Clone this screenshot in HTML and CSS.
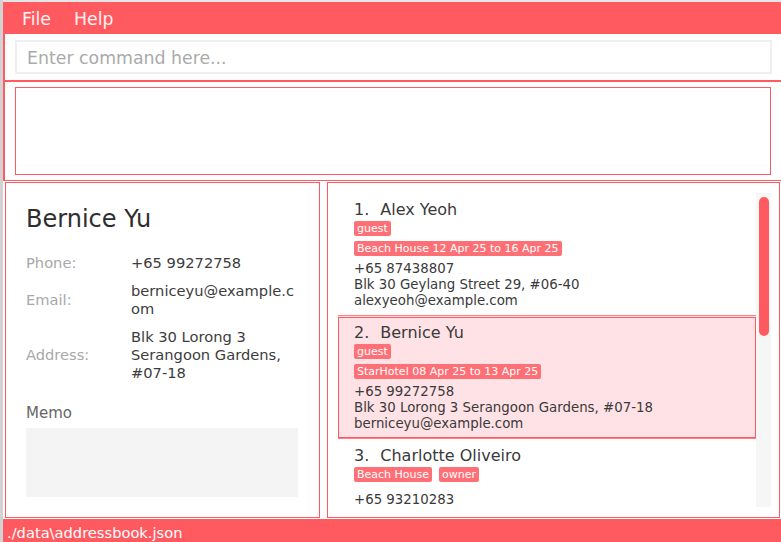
FILE: index.html
```html
<!DOCTYPE html>
<html>
<head>
<meta charset="utf-8">
<title>Address Book</title>
<link rel="stylesheet" href="styles.css">
</head>
<body>
<div class="app">
  <div class="menubar">
    <span class="menu-item">File</span>
    <span class="menu-item">Help</span>
  </div>
  <div class="command-area">
    <div class="command-box">Enter command here...</div>
  </div>
  <div class="result-area">
    <div class="result-box"></div>
  </div>
  <div class="main">
    <div class="panel detail-panel">
      <div class="detail-name">Bernice Yu</div>
      <div class="detail-grid">
        <div class="label">Phone:</div>
        <div class="value">+65 99272758</div>
        <div class="label">Email:</div>
        <div class="value email">berniceyu@example.com</div>
        <div class="label">Address:</div>
        <div class="value">Blk 30 Lorong 3 Serangoon Gardens, #07-18</div>
      </div>
      <div class="memo-label">Memo</div>
      <div class="memo-box"></div>
    </div>
    <div class="panel list-panel">
      <div class="list">
        <div class="cells">
          <div class="cell">
            <div class="card">
              <div class="card-name"><span class="idx">1.</span>Alex Yeoh</div>
              <div class="tags"><span class="tag">guest</span></div>
              <div class="tags bookings"><span class="tag">Beach House 12 Apr 25 to 16 Apr 25</span></div>
              <div class="card-details">
                <div>+65 87438807</div>
                <div>Blk 30 Geylang Street 29, #06-40</div>
                <div>alexyeoh@example.com</div>
              </div>
            </div>
          </div>
          <div class="cell selected">
            <div class="card">
              <div class="card-name"><span class="idx">2.</span>Bernice Yu</div>
              <div class="tags"><span class="tag">guest</span></div>
              <div class="tags bookings"><span class="tag">StarHotel 08 Apr 25 to 13 Apr 25</span></div>
              <div class="card-details">
                <div>+65 99272758</div>
                <div>Blk 30 Lorong 3 Serangoon Gardens, #07-18</div>
                <div>berniceyu@example.com</div>
              </div>
            </div>
          </div>
          <div class="cell">
            <div class="card">
              <div class="card-name"><span class="idx">3.</span>Charlotte Oliveiro</div>
              <div class="tags"><span class="tag">Beach House</span><span class="tag">owner</span></div>
              <div class="tags bookings"></div>
              <div class="card-details">
                <div>+65 93210283</div>
              </div>
            </div>
          </div>
        </div>
        <div class="scrollbar"><div class="thumb"></div></div>
      </div>
    </div>
  </div>
  <div class="statusbar">./data\addressbook.json</div>
</div>
</body>
</html>
```
FILE: styles.css
```css
html, body {
  margin: 0;
  padding: 0;
}
body {
  background: #d2d2d2;
  font-family: "DejaVu Sans", sans-serif;
  width: 781px;
  height: 542px;
  overflow: hidden;
}
.app {
  margin-left: 3px;
  border-top: 2px solid #e6e6e6;
  background: #ffffff;
  height: 540px;
  display: flex;
  flex-direction: column;
}
.menubar {
  height: 32px;
  box-sizing: border-box;
  background: #ff5a5f;
  display: flex;
  align-items: center;
  padding-left: 19px;
  padding-top: 2px;
  gap: 23px;
  flex: none;
}
.menu-item {
  color: #fff3f3;
  font-size: 17.33px;
  line-height: 20px;
}
.command-area {
  height: 46px;
  box-sizing: border-box;
  border-left: 2px solid #ff5a5f;
  padding: 6px 9px 6px 10px;
  flex: none;
}
.command-box {
  height: 34px;
  box-sizing: border-box;
  border: 2px solid #efefef;
  padding-left: 10px;
  padding-top: 2px;
  display: flex;
  align-items: center;
  color: #aaaaaa;
  font-size: 17.33px;
  line-height: 20px;
}
.result-area {
  flex: none;
  border-top: 2px solid #ff5a5f;
  border-left: 2px solid #ff5a5f;
  border-bottom: 1px solid #ff5a5f;
  padding: 5px 10px 5px 10px;
}
.result-box {
  height: 88px;
  box-sizing: border-box;
  border: 1px solid #ff5a5f;
}
.main {
  flex: none;
  margin-top: 1px;
  height: 336px;
  display: flex;
  gap: 7px;
  padding-left: 2px;
}
.panel {
  border: 1px solid #ff5a5f;
  box-sizing: border-box;
  height: 336px;
  background: #ffffff;
}
.detail-panel {
  width: 315px;
  padding: 22px 21px 0 20px;
}
.detail-name {
  font-size: 24px;
  line-height: 28px;
  color: #2e2e2e;
  margin-bottom: 21px;
}
.detail-grid {
  display: grid;
  grid-template-columns: 105px 167px;
  row-gap: 10px;
  align-items: center;
  font-size: 14.67px;
  line-height: 18px;
  margin-bottom: 22px;
}
.label {
  color: #a8a8a8;
}
.value {
  color: #3d3d3d;
}
.email {
  word-break: break-all;
}
.memo-label {
  font-size: 15px;
  line-height: 18px;
  color: #666666;
  margin-bottom: 6px;
}
.memo-box {
  width: 272px;
  height: 69px;
  background: #f4f4f4;
}
.list-panel {
  width: 453px;
  padding: 10px 8px 10px 10px;
}
.list {
  display: flex;
  height: 314px;
}
.cells {
  flex: 1;
  overflow: hidden;
}
.cell {
  padding-top: 1px;
  border-bottom: 1px solid #ff7e84;
}
.card {
  border: 1px solid transparent;
  padding: 5px 15px 5px 15px;
  display: flex;
  flex-direction: column;
}
.cell.selected {
  background: #ffe2e5;
}
.cell.selected .card {
  border-color: #ff5a5f;
}
.card-name {
  font-size: 16px;
  line-height: 20px;
  color: #3a3a3a;
}
.idx {
  margin-right: 11px;
}
.tags {
  display: flex;
  gap: 7px;
  margin-top: 1px;
}
.tags.bookings {
  margin-top: 5px;
}
.tag {
  background: #ff6f76;
  color: #ffffff;
  font-size: 11px;
  line-height: 13px;
  padding: 1px 3px;
  border-radius: 2px;
}
.card-details {
  margin-top: 5px;
  font-size: 13.33px;
  line-height: 16px;
  color: #3a3a3a;
}
.scrollbar {
  width: 15px;
  flex: none;
  background: #f6f6f6;
  box-sizing: border-box;
  padding: 4px 2px 0 3px;
}
.thumb {
  height: 139px;
  background: #ff5a5f;
  border-radius: 5px;
}
.statusbar {
  flex: 1;
  background: #ff5a5f;
  color: #ffffff;
  font-size: 14.67px;
  line-height: 18px;
  padding: 5px 4px 0 4px;
  margin-top: 1px;
}
```
